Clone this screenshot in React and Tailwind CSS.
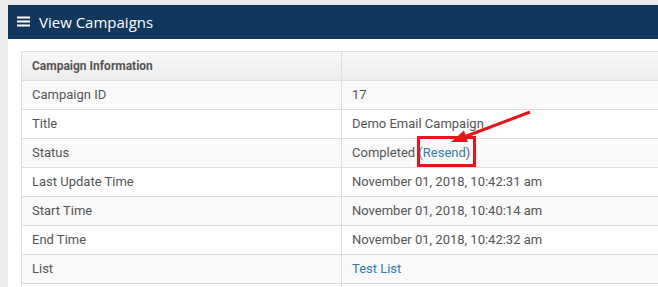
import React from 'react';

const rows = [
    { label: 'Campaign ID', value: '17' },
    { label: 'Title', value: 'Demo Email Campaign' },
    { label: 'Status', value: 'status' },
    { label: 'Last Update Time', value: 'November 01, 2018, 10:42:31 am' },
    { label: 'Start Time', value: 'November 01, 2018, 10:40:14 am' },
    { label: 'End Time', value: 'November 01, 2018, 10:42:32 am' },
    { label: 'List', value: 'link' },
];

const App = () => {
    return (
        <div className="relative w-[658px] h-[287px] overflow-hidden bg-[#ebebeb] pl-[8px] pt-[5px]" style={{ fontFamily: 'Roboto, sans-serif' }}>
            <div className="w-[720px] h-[300px] bg-white">
                <div className="h-[34px] bg-[#12375e] flex items-center pl-[9px] gap-[9px]">
                    <svg width="13" height="11" viewBox="0 0 13 11" className="mt-[-1px]">
                        <rect x="0" y="0.5" width="13" height="2" fill="#fff" />
                        <rect x="0" y="4.5" width="13" height="2" fill="#fff" />
                        <rect x="0" y="8.5" width="13" height="2" fill="#fff" />
                    </svg>
                    <span className="text-white text-[15px]" style={{ fontFamily: '"Open Sans", sans-serif' }}>View Campaigns</span>
                </div>
                <div className="pl-[13px] pt-[12px]">
                    <table className="w-[700px] border-collapse text-[13px] text-[#555]">
                        <tbody>
                            <tr className="h-[29px] bg-gradient-to-b from-[#f8f8f8] to-[#ececec]">
                                <td className="w-[320px] border border-[#dddddd] px-[10px] font-bold text-[12px]">Campaign Information</td>
                                <td className="border border-[#dddddd] px-[10px]"></td>
                            </tr>
                            {rows.map((row, i) => (
                                <tr key={row.label} className={`h-[29px] ${i % 2 === 0 ? 'bg-[#f9f9f9]' : 'bg-white'}`}>
                                    <td className="border border-[#dddddd] px-[10px]">{row.label}</td>
                                    <td className="border border-[#dddddd] px-[10px]">
                                        {row.value === 'status' ? (
                                            <span>Completed <span className="text-[#337ab7]">(Resend</span>)</span>
                                        ) : row.value === 'link' ? (
                                            <span className="text-[#337ab7]">Test List</span>
                                        ) : row.value}
                                    </td>
                                </tr>
                            ))}
                            <tr className="h-[29px] bg-white">
                                <td className="border border-[#dddddd]"></td>
                                <td className="border border-[#dddddd]"></td>
                            </tr>
                        </tbody>
                    </table>
                </div>
            </div>
            <svg className="absolute left-0 top-0 pointer-events-none" width="658" height="287">
                <rect x="418.5" y="137.5" width="56" height="28" fill="none" stroke="#e3171b" strokeWidth="3" />
                <line x1="530" y1="112" x2="464" y2="137" stroke="#e3171b" strokeWidth="3" />
                <polygon points="451,142 468,142 464,130.5" fill="#e3171b" />
            </svg>
        </div>
    );
};

export default App;
